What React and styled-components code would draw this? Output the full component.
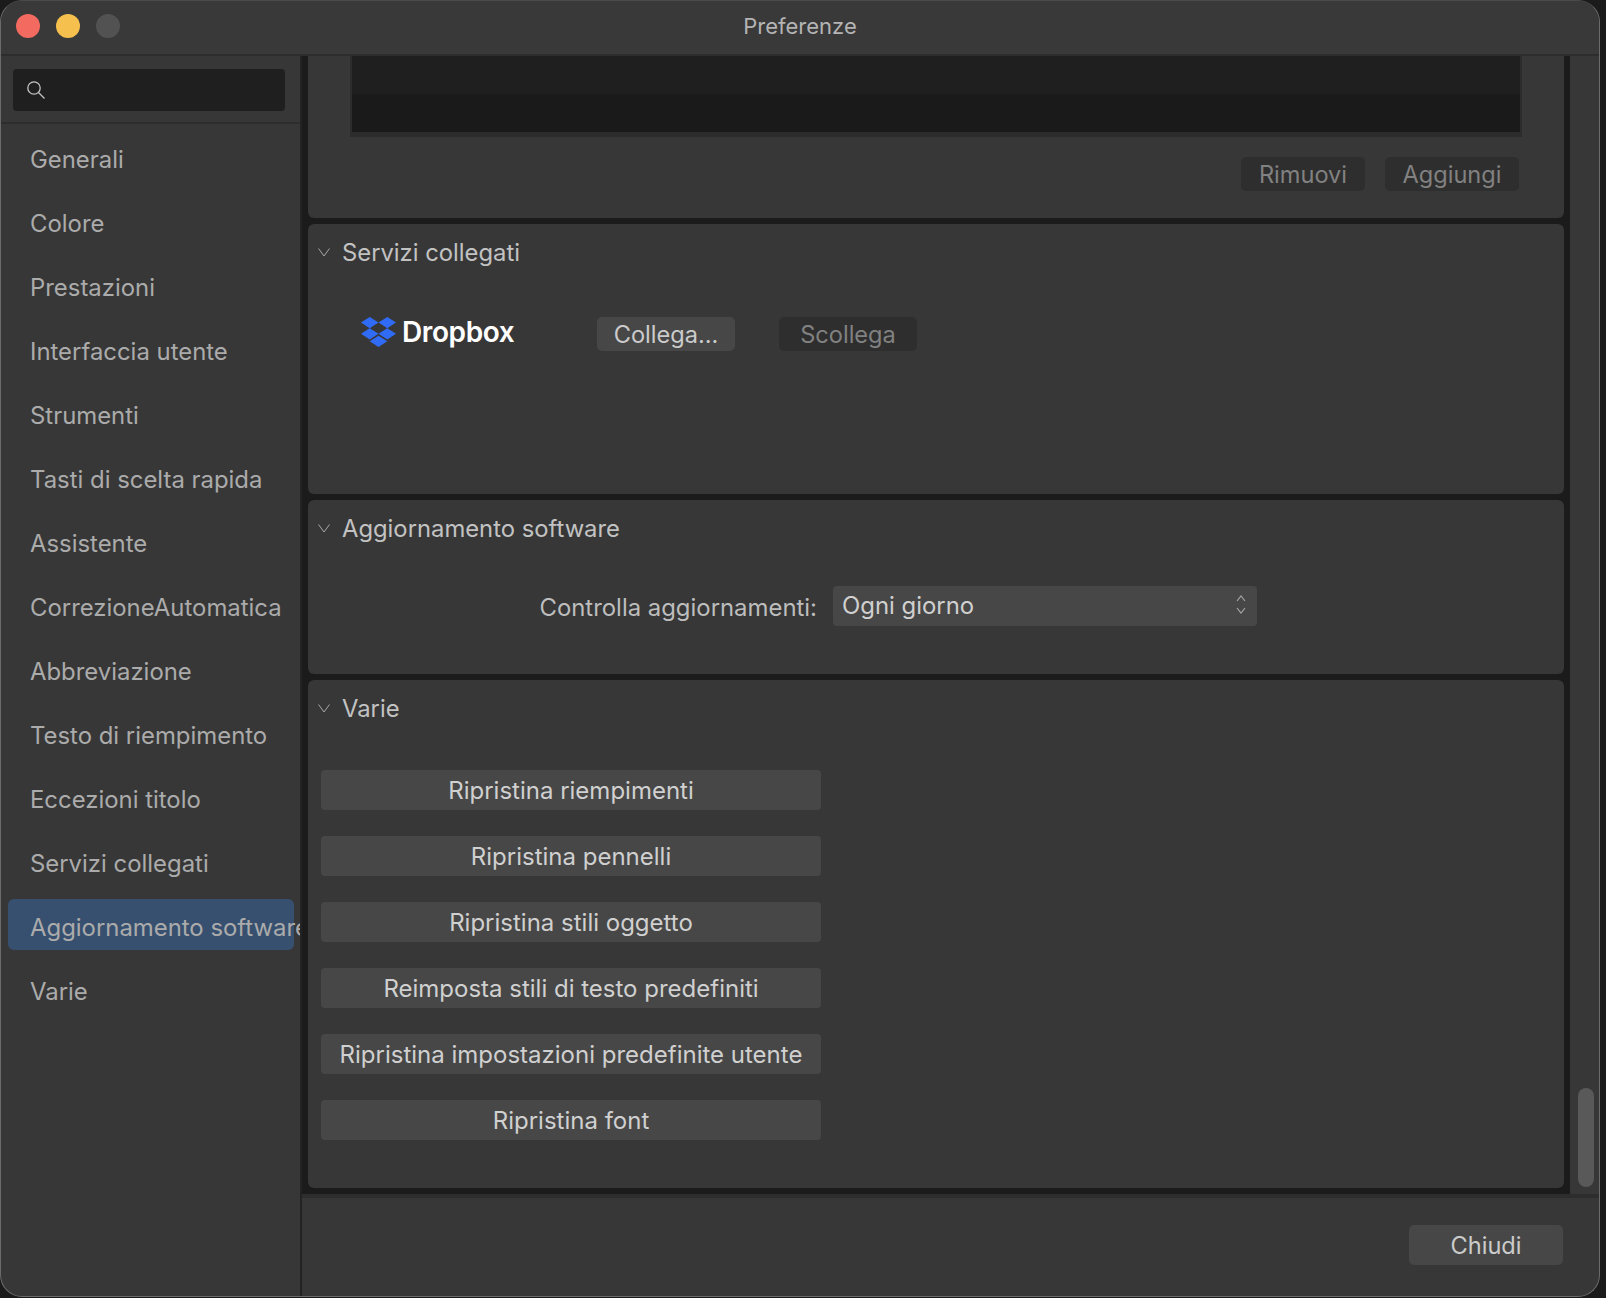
import React from "react";
import styled, { createGlobalStyle } from "styled-components";

const GlobalStyle = createGlobalStyle`
  html, body {
    margin: 0;
    padding: 0;
    background: #1b1b1b;
  }
  * {
    box-sizing: border-box;
  }
`;

const SECTIONS = [
  "Generali",
  "Colore",
  "Prestazioni",
  "Interfaccia utente",
  "Strumenti",
  "Tasti di scelta rapida",
  "Assistente",
  "CorrezioneAutomatica",
  "Abbreviazione",
  "Testo di riempimento",
  "Eccezioni titolo",
  "Servizi collegati",
  "Aggiornamento software",
  "Varie",
];

const RESETS = [
  "Ripristina riempimenti",
  "Ripristina pennelli",
  "Ripristina stili oggetto",
  "Reimposta stili di testo predefiniti",
  "Ripristina impostazioni predefinite utente",
  "Ripristina font",
];

const Chevron = () => (
  <ChevronIcon viewBox="0 0 12 9" fill="none" stroke="#a8a8a8" strokeWidth="1">
    <path d="M0.5 0.5 L6 8 L11.5 0.5" />
  </ChevronIcon>
);

const DropboxLogo = () => (
  <LogoMark viewBox="0 0 35 30">
    <path
      fill="#2f6bf5"
      d="M8.7 0 17.5 5.6 8.7 11.2 0 5.6Z M26.3 0 35 5.6 26.3 11.2 17.5 5.6Z M8.7 11.2 17.5 16.8 8.7 22.4 0 16.8Z M26.3 11.2 35 16.8 26.3 22.4 17.5 16.8Z M17.5 18.7 26.3 24.3 17.5 30 8.7 24.3Z"
    />
  </LogoMark>
);

const App = () => {
  return (
    <>
      <GlobalStyle />
      <Window>
        <TitleBar>
          <Lights>
            <Light $color="#f26a60" />
            <Light $color="#f6c04e" />
            <Light $color="#525252" />
          </Lights>
          <Title>Preferenze</Title>
        </TitleBar>
        <Body>
          <Sidebar>
            <SearchArea>
              <SearchBox>
                <svg width="20" height="20" viewBox="0 0 20 20" fill="none" stroke="#c4c4c4" strokeWidth="1.3">
                  <circle cx="8" cy="8" r="6.2" />
                  <path d="M12.5 12.5 L18.5 18.5" />
                </svg>
              </SearchBox>
            </SearchArea>
            <NavList>
              {SECTIONS.map((name) => (
                <NavItem key={name} $active={name === "Aggiornamento software"}>
                  {name}
                </NavItem>
              ))}
            </NavList>
          </Sidebar>
          <Main>
            <ScrollArea>
              <Panels>
                <TablePanel>
                  <ListBox>
                    <ListRow />
                    <ListRow $dark />
                  </ListBox>
                  <ButtonRow>
                    <Button $disabled $width={124}>Rimuovi</Button>
                    <Button $disabled $width={134}>Aggiungi</Button>
                  </ButtonRow>
                </TablePanel>
                <Panel $height={270}>
                  <PanelHeader>
                    <Chevron />
                    Servizi collegati
                  </PanelHeader>
                  <ServiceRow>
                    <Logo>
                      <DropboxLogo />
                      <LogoText>Dropbox</LogoText>
                    </Logo>
                    <Button $width={138}>Collega...</Button>
                    <Button $disabled $width={138}>Scollega</Button>
                  </ServiceRow>
                </Panel>
                <Panel $height={174}>
                  <PanelHeader>
                    <Chevron />
                    Aggiornamento software
                  </PanelHeader>
                  <SelectRow>
                    <SelectLabel>Controlla aggiornamenti:</SelectLabel>
                    <Select>
                      Ogni giorno
                      <svg width="10" height="20" viewBox="0 0 10 20" fill="none" stroke="#a8a8a8" strokeWidth="1.1">
                        <path d="M1 6 L5 1 L9 6" />
                        <path d="M1 13 L5 18 L9 13" />
                      </svg>
                    </Select>
                  </SelectRow>
                </Panel>
                <Panel $height={508}>
                  <PanelHeader>
                    <Chevron />
                    Varie
                  </PanelHeader>
                  <ResetList>
                    {RESETS.map((label) => (
                      <WideButton key={label}>{label}</WideButton>
                    ))}
                  </ResetList>
                </Panel>
              </Panels>
              <ScrollTrack>
                <ScrollThumb />
              </ScrollTrack>
            </ScrollArea>
            <Footer>
              <Button $width={154} $height={40}>Chiudi</Button>
            </Footer>
          </Main>
        </Body>
      </Window>
    </>
  );
};

export default App;

const Window = styled.div`
  width: 1600px;
  height: 1297px;
  background: #373737;
  border: 1px solid #6b6b6b;
  border-top-color: #4a4a4a;
  border-radius: 22px;
  overflow: hidden;
  display: flex;
  flex-direction: column;
  font-family: Inter, "Liberation Sans", sans-serif;
`;

const TitleBar = styled.div`
  height: 55px;
  flex: none;
  display: flex;
  align-items: center;
  justify-content: center;
  border-bottom: 2px solid #2d2d2d;
  background: #393939;
  position: relative;
`;

const Lights = styled.div`
  position: absolute;
  left: 15px;
  top: 13px;
  display: flex;
  gap: 16px;
`;

const Light = styled.span`
  width: 24px;
  height: 24px;
  border-radius: 50%;
  background: ${(p) => p.$color};
`;

const Title = styled.div`
  font-size: 22px;
  color: #b4b4b4;
  padding-bottom: 4px;
`;

const Body = styled.div`
  flex: 1;
  min-height: 0;
  display: flex;
`;

const Sidebar = styled.div`
  width: 299px;
  flex: none;
  overflow: hidden;
`;

const SearchArea = styled.div`
  height: 68px;
  padding: 13px 15px 11px 12px;
  border-bottom: 2px solid #2d2d2d;
`;

const SearchBox = styled.div`
  height: 42px;
  background: #1f1f1f;
  border-radius: 4px;
  display: flex;
  align-items: center;
  padding-left: 13px;
`;

const NavList = styled.div`
  padding: 4px 6px 0 7px;
  display: flex;
  flex-direction: column;
  gap: 13px;
  margin-top: 3px;
`;

const NavItem = styled.div`
  height: 51px;
  width: 286px;
  padding: 6px 0 0 22px;
  border-radius: 6px;
  display: flex;
  align-items: center;
  white-space: nowrap;
  font-size: 23.9px;
  color: #ababab;
  background: ${(p) => (p.$active ? "#37506f" : "transparent")};
`;

const Main = styled.div`
  flex: 1;
  min-width: 0;
  display: flex;
  flex-direction: column;
  border-left: 2px solid #232323;
`;

const ScrollArea = styled.div`
  flex: 1;
  min-height: 0;
  display: flex;
  border-bottom: 4px solid #2d2d2d;
`;

const Panels = styled.div`
  width: 1268px;
  flex: none;
  background: #1b1b1b;
  padding: 0 6px 6px 6px;
  display: flex;
  flex-direction: column;
  gap: 6px;
`;

const Panel = styled.section`
  height: ${(p) => p.$height}px;
  flex: none;
  background: #373737;
  border-radius: 6px;
  padding-top: 14px;
`;

const TablePanel = styled(Panel)`
  height: 162px;
  padding: 0 42px 0 42px;
  border-radius: 0 0 6px 6px;
`;

const ListBox = styled.div`
  height: 81px;
  border: 2px solid #2c2c2c;
  border-top: 0;
  border-bottom-width: 5px;
`;

const ListRow = styled.div`
  height: 38px;
  background: ${(p) => (p.$dark ? "#1a1a1a" : "#1f1f1f")};
`;

const ButtonRow = styled.div`
  display: flex;
  justify-content: flex-end;
  gap: 20px;
  margin-top: 20px;
  padding-right: 3px;
`;

const Button = styled.button`
  width: ${(p) => p.$width}px;
  height: ${(p) => p.$height || 34}px;
  flex: none;
  border: 0;
  padding: 0;
  border-radius: 5px;
  font-family: inherit;
  font-size: 23.6px;
  background: ${(p) => (p.$disabled ? "#2e2e2e" : "#474747")};
  color: ${(p) => (p.$disabled ? "#818181" : "#cbcbcb")};
`;

const PanelHeader = styled.h3`
  margin: 0;
  height: 28px;
  padding-left: 10px;
  display: flex;
  align-items: center;
  font-size: 23.8px;
  font-weight: 400;
  color: #c2c2c2;
`;

const ChevronIcon = styled.svg`
  width: 12px;
  height: 9px;
  margin-right: 12px;
`;

const ServiceRow = styled.div`
  display: flex;
  align-items: center;
  gap: 44px;
  margin: 49px 0 0 53px;
`;

const Logo = styled.div`
  width: 192px;
  margin-bottom: 4px;
  display: flex;
  align-items: center;
  gap: 6px;
`;

const LogoMark = styled.svg`
  width: 35px;
  height: 30px;
  flex: none;
`;

const LogoText = styled.span`
  font-size: 28px;
  font-weight: 600;
  letter-spacing: -0.4px;
  color: #ffffff;
`;

const SelectRow = styled.div`
  display: flex;
  align-items: center;
  margin-top: 44px;
`;

const SelectLabel = styled.div`
  width: 509px;
  padding-top: 2px;
  text-align: right;
  font-size: 23.9px;
  color: #bdbdbd;
`;

const Select = styled.div`
  width: 424px;
  height: 40px;
  margin-left: 16px;
  padding: 0 11px 2px 9px;
  background: #474747;
  border-radius: 4px;
  display: flex;
  align-items: center;
  justify-content: space-between;
  font-size: 23.9px;
  color: #d0d0d0;
`;

const ResetList = styled.div`
  margin: 48px 0 0 13px;
  width: 500px;
  display: flex;
  flex-direction: column;
  gap: 26px;
`;

const WideButton = styled.button`
  height: 40px;
  border: 0;
  padding: 0;
  border-radius: 4px;
  background: #474747;
  color: #d0d0d0;
  font-family: inherit;
  font-size: 24px;
`;

const ScrollTrack = styled.div`
  flex: 1;
  display: flex;
  flex-direction: column;
  justify-content: flex-end;
  align-items: center;
  padding: 0 0 7px 3px;
`;

const ScrollThumb = styled.div`
  width: 16px;
  height: 99px;
  border-radius: 8px;
  background: #595959;
`;

const Footer = styled.div`
  flex: 1;
  max-height: 98px;
  display: flex;
  justify-content: flex-end;
  align-items: flex-start;
  padding: 27px 36px 0 0;
`;
